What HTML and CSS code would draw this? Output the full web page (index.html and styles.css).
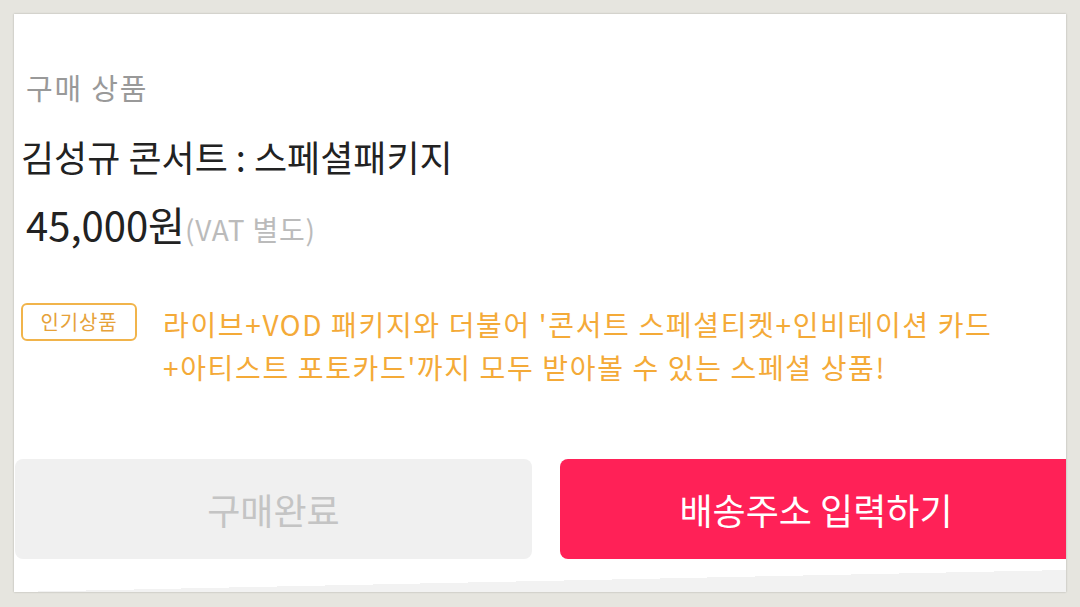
FILE: index.html
```html
<!DOCTYPE html>
<html>
<head>
  <meta charset="utf-8">
  <link rel="stylesheet" href="styles.css">
</head>
<body>
  <div id="order-box">
    <div class="product-info">
      <div class="section-label">구매 상품</div>
      <div class="product-name">김성규 콘서트 : 스페셜패키지</div>
      <div class="product-price">45,000원<span class="vat">(VAT 별도)</span></div>
    </div>

    <div class="promo">
      <span class="badge">인기상품</span>
      <p class="promo-text">라이브+VOD 패키지와 더불어 '콘서트 스페셜티켓+인비테이션 카드<br>+아티스트 포토카드'까지 모두 받아볼 수 있는 스페셜 상품!</p>
    </div>

    <div class="button-row">
      <button type="button" class="btn btn-done">구매완료</button>
      <button type="button" class="btn btn-address">배송주소 입력하기</button>
    </div>

    <div class="footer-shade"></div>
  </div>
</body>
</html>
```

FILE: styles.css
```css
/* popup card on the grey backdrop */
body {
  background-color: #e6e5df;
  font-family: "Noto Sans CJK KR", "Noto Sans", sans-serif;
  margin: 0;
  padding: 14px;
}

#order-box {
  background-color: #fff;
  width: 1052px;
  height: 578px;
  box-shadow: 0 0 2px rgba(0, 0, 0, 0.25);
  overflow: hidden;
  display: flex;
  flex-direction: column;
}

.product-info {
  padding-top: 53px;
}

.section-label {
  font-size: 29px;
  line-height: 40px;
  color: #999;
  padding-left: 12px;
  letter-spacing: 1.8px;
}

.product-name {
  margin-top: 24px;
  font-size: 36px;
  line-height: 50px;
  color: #222;
  padding-left: 7px;
}

.product-price {
  margin-top: 18px;
  font-size: 40px;
  line-height: 50px;
  color: #222;
  padding-left: 12px;
}

.vat {
  font-size: 28px;
  color: #bbb;
  letter-spacing: 0.8px;
}

.promo {
  display: flex;
  align-items: flex-start;
  margin-top: 49px;
  padding-left: 7px;
}

.badge {
  width: 116px;
  height: 38px;
  box-sizing: border-box;
  border: 2px solid #f1b44b;
  border-radius: 6px;
  color: #e6a23a;
  font-size: 20px;
  line-height: 34px;
  text-align: center;
  letter-spacing: 0.8px;
  flex-shrink: 0;
}

.promo-text {
  margin: 0 0 0 26px;
  font-size: 28px;
  line-height: 43px;
  color: #f4aa38;
  letter-spacing: 1.65px;
}

.button-row {
  display: flex;
  gap: 28px;
  margin-top: 70px;
  padding-left: 1px;
}

.btn {
  height: 100px;
  border: none;
  font-family: inherit;
  font-size: 36px;
}

.btn-done {
  width: 517px;
  background-color: #f0f0f0;
  color: #c4c4c4;
  border-radius: 8px;
}

.btn-address {
  flex: 1;
  background-color: #ff2157;
  color: #fff;
  border-radius: 8px 0 0 8px;
  padding-left: 12px;
}

.footer-shade {
  margin-top: auto;
  height: 22px;
  background: linear-gradient(to bottom right, #fff 50%, #f2f2f2 50%);
}
```
